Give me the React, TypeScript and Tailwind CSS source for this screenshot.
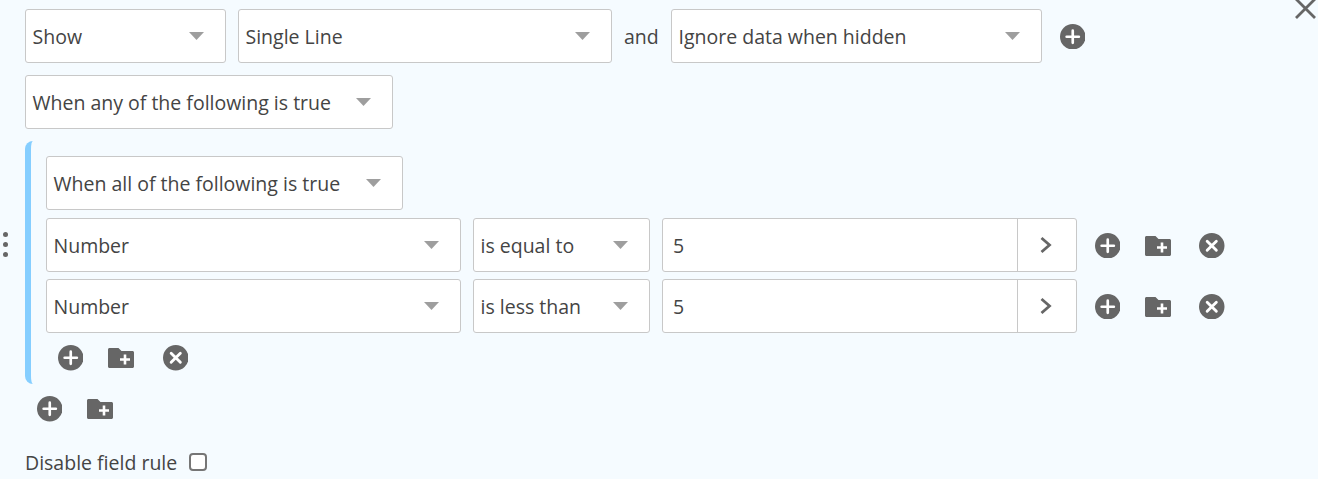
const Arrow = () => (
  <svg width="15" height="8" viewBox="0 0 15 8" className="shrink-0 -mt-[1px]">
    <path d="M0 0H15L7.5 8Z" fill="#9e9e9e" />
  </svg>
);

const Select = ({ label, width }: { label: string; width: string }) => (
  <div className={`${width} h-[54px] shrink-0 flex items-center justify-between bg-white border border-[#c8c8c8] rounded-[3px] pl-[6.5px] pr-[21.5px]`}>
    <span className="pt-[2px]">{label}</span>
    <Arrow />
  </div>
);

const PlusIcon = () => (
  <svg width="25.5" height="25.5" viewBox="0 0 25 25" className="shrink-0 mt-[1px]">
    <circle cx="12.5" cy="12.5" r="12.5" fill="#666666" />
    <path d="M12.5 6.5V18.5M6.5 12.5H18.5" stroke="#fff" strokeWidth="2.6" strokeLinecap="round" />
  </svg>
);

const FolderIcon = () => (
  <svg width="26" height="22" viewBox="0 0 26 22" className="shrink-0 mt-[1px]">
    <path d="M1.5 1H10.5L13.5 4H24.5C25.3 4 26 4.7 26 5.5V19.5C26 20.3 25.3 21 24.5 21H1.5C.7 21 0 20.3 0 19.5V2.5C0 1.7.7 1 1.5 1Z" fill="#666666" />
    <path d="M17 7.5V17.5M12 12.5H22" stroke="#fff" strokeWidth="2.6" />
  </svg>
);

const RemoveIcon = () => (
  <svg width="25.5" height="25.5" viewBox="0 0 25 25" className="shrink-0 mt-[1px]">
    <circle cx="12.5" cy="12.5" r="12.5" fill="#666666" />
    <path d="M8 8L17 17M17 8L8 17" stroke="#fff" strokeWidth="2.8" strokeLinecap="round" />
  </svg>
);

const ConditionRow = ({ op }: { op: string }) => (
  <div className="flex items-center gap-3">
    <Select label="Number" width="w-[415px]" />
    <Select label={op} width="w-[177px]" />
    <div className="w-[415px] h-[54px] flex bg-white border border-[#c8c8c8] rounded-[3px]">
      <div className="flex-1 flex items-center pl-[10px] pt-[2px]">5</div>
      <div className="w-[59px] flex items-center justify-center border-l border-[#c8c8c8] pr-[3px]">
        <svg width="12" height="18" viewBox="0 0 12 18">
          <path d="M1.5 2L9.5 9L1.5 16" fill="none" stroke="#666666" strokeWidth="2.8" />
        </svg>
      </div>
    </div>
    <div className="flex items-center ml-[5.5px]">
      <PlusIcon />
      <div className="ml-[25px] flex"><FolderIcon /></div>
      <div className="ml-[28px] flex"><RemoveIcon /></div>
    </div>
  </div>
);

export default function App() {
  return (
    <div className="relative w-[1318px] h-[479px] overflow-hidden bg-[#f5fbff] pl-[25px] pt-[9px] font-['Open_Sans',sans-serif] text-[19.5px] text-[#444444]">
      {/* close */}
      <svg width="24" height="24" viewBox="0 0 24 24" className="absolute right-[1px] -top-[3px]">
        <path d="M3 2L22 21M22 2L3 21" stroke="#666666" strokeWidth="2.8" />
      </svg>

      {/* drag handle */}
      <div className="absolute left-[3px] top-[232px] flex flex-col gap-[5px]">
        <span className="w-[5px] h-[5px] rounded-full bg-[#666666]" />
        <span className="w-[5px] h-[5px] rounded-full bg-[#666666]" />
        <span className="w-[5px] h-[5px] rounded-full bg-[#666666]" />
      </div>

      <div className="flex items-center gap-3">
        <Select label="Show" width="w-[201px]" />
        <Select label="Single Line" width="w-[374px]" />
        <span className="pt-[2px] w-[35px]">and</span>
        <Select label="Ignore data when hidden" width="w-[371px]" />
        <div className="ml-[5.5px] flex"><PlusIcon /></div>
      </div>

      <div className="mt-3">
        <Select label="When any of the following is true" width="w-[368px]" />
      </div>

      <div className="mt-3 h-[243px] border-l-[6px] border-[#85ceff] rounded-l-[8px] pl-[15px] pt-[15px]">
        <Select label="When all of the following is true" width="w-[357px]" />
        <div className="mt-2 flex flex-col gap-[7px]">
          <ConditionRow op="is equal to" />
          <ConditionRow op="is less than" />
        </div>
        <div className="mt-[11px] ml-[11.5px] flex items-center">
          <PlusIcon />
          <div className="ml-[25px] flex"><FolderIcon /></div>
          <div className="ml-[28.5px] flex"><RemoveIcon /></div>
        </div>
      </div>

      <div className="mt-[11px] ml-[11.5px] flex items-center">
        <PlusIcon />
        <div className="ml-[25px] flex"><FolderIcon /></div>
      </div>

      <label className="mt-[26px] flex items-center gap-[12px]">
        <span>Disable field rule</span>
        <span className="w-[18px] h-[18px] bg-white border-2 border-[#767676] rounded-[4px]" />
      </label>
    </div>
  );
}
